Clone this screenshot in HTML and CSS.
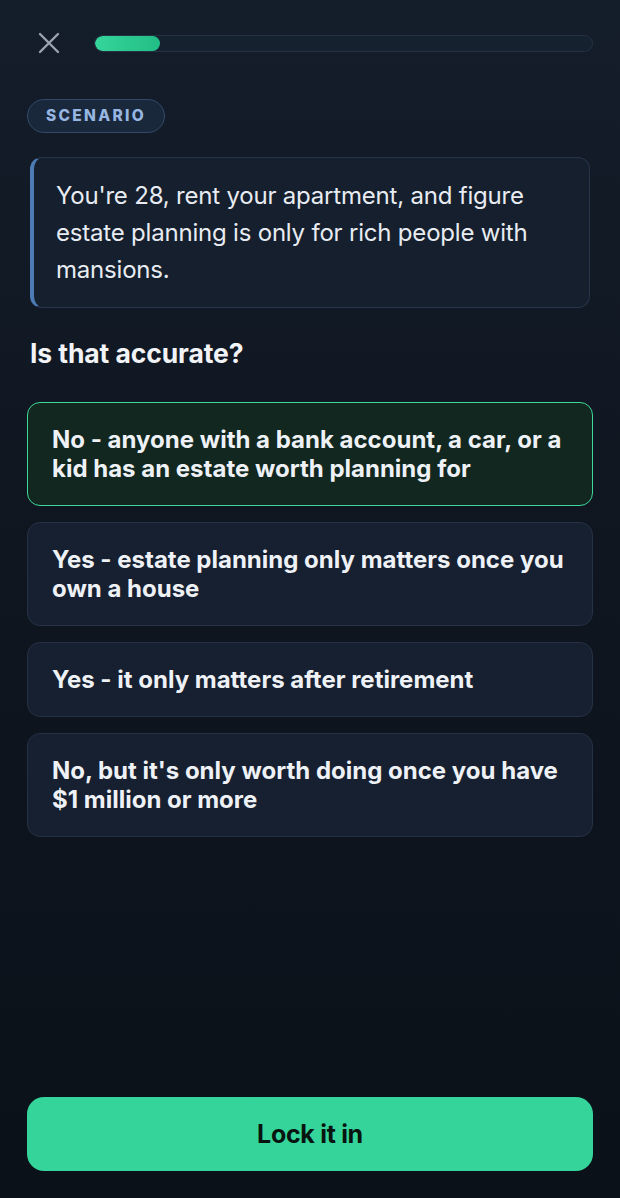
FILE: index.html
```html
<!DOCTYPE html>
<html lang="en">
<head>
<meta charset="utf-8">
<title>Scenario</title>
<link rel="stylesheet" href="styles.css">
</head>
<body>
<div class="screen">
  <header class="topbar">
    <button class="close" aria-label="Close">
      <svg width="22" height="22" viewBox="0 0 22 22"><path d="M2 2 L20 20 M20 2 L2 20" stroke="#9aa3ae" stroke-width="2.4" stroke-linecap="round" fill="none"/></svg>
    </button>
    <div class="progress"><div class="progress-fill" style="width:13%"></div></div>
  </header>

  <main class="content">
    <span class="pill">SCENARIO</span>
    <div class="scenario">
      <p>You're 28, rent your apartment, and figure estate planning is only for rich people with mansions.</p>
    </div>
    <h2 class="question">Is that accurate?</h2>
    <div class="options">
      <div class="option selected">No - anyone with a bank account, a car, or a kid has an estate worth planning for</div>
      <div class="option">Yes - estate planning only matters once you own a house</div>
      <div class="option">Yes - it only matters after retirement</div>
      <div class="option">No, but it's only worth doing once you have $1 million or more</div>
    </div>
  </main>

  <footer class="footer">
    <button class="cta">Lock it in</button>
  </footer>
</div>
</body>
</html>
```

FILE: styles.css
```css
* { box-sizing: border-box; }
html, body {
  margin: 0;
  padding: 0;
  height: 100%;
}
body {
  background: linear-gradient(180deg, #141d2a 0%, #0f1620 45%, #0b1119 100%);
  font-family: Inter, "Noto Sans", "Liberation Sans", sans-serif;
  color: #eef1f5;
}
.screen {
  height: 1198px;
  display: flex;
  flex-direction: column;
  padding: 0 27px;
}
.topbar {
  display: flex;
  align-items: center;
  gap: 34px;
  padding-top: 32px;
  padding-left: 11px;
  height: 54px;
}
.close {
  background: none;
  border: 0;
  padding: 0;
  width: 22px;
  height: 22px;
  display: block;
}
.close svg { display: block; }
.progress {
  flex: 1;
  height: 17px;
  border-radius: 9px;
  background: #162130;
  border: 1px solid #243243;
  overflow: hidden;
  padding: 0;
}
.progress-fill {
  height: 100%;
  border-radius: 9px;
  background: linear-gradient(90deg, #34d59b, #22bd86);
}
.content {
  display: flex;
  flex-direction: column;
  align-items: flex-start;
  padding-top: 45px;
}
.pill {
  display: inline-block;
  height: 34px;
  line-height: 31px;
  padding: 0 18px;
  border-radius: 17px;
  border: 1.5px solid #34496a;
  background: #1a283b;
  color: #98b6e2;
  font-weight: 800;
  font-size: 15.5px;
  letter-spacing: 2.3px;
}
.scenario {
  margin-top: 24px;
  margin-left: 3px;
  width: 560px;
  background: #151f2d;
  border: 1px solid #27354a;
  border-left: 4px solid #4d7bb5;
  border-radius: 12px;
  padding: 19px 20px 19px 22px;
}
.scenario p {
  margin: 0;
  font-size: 24px;
  line-height: 37px;
  color: #e8ecf2;
  letter-spacing: -0.2px;
}
.question {
  margin: 29px 0 0 3px;
  font-size: 26.5px;
  font-weight: 700;
  line-height: 32px;
  color: #f1f3f6;
  letter-spacing: -0.1px;
}
.options {
  margin-top: 33px;
  width: 100%;
  display: flex;
  flex-direction: column;
  gap: 16px;
}
.option {
  background: #162030;
  border: 1.5px solid #253144;
  border-radius: 13px;
  padding: 22px 24px;
  font-size: 24px;
  font-weight: 700;
  line-height: 29px;
  color: #eef1f5;
  letter-spacing: 0;
}
.option.selected {
  background: #11271f;
  border-color: #3fd89a;
}
.footer {
  margin-top: auto;
  padding-bottom: 27px;
}
.cta {
  width: 100%;
  height: 74px;
  border: 0;
  border-radius: 17px;
  background: #35d49a;
  color: #071410;
  font-family: Inter, "Noto Sans", "Liberation Sans", sans-serif;
  font-size: 25px;
  font-weight: 700;
  letter-spacing: -0.3px;
}
```
